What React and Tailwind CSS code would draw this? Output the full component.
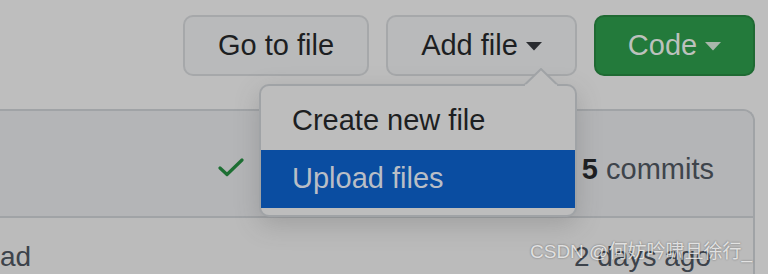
import React from "react";

function Caret({ className }) {
  return (
    <svg width="16" height="9" viewBox="0 0 16 9" className={className}>
      <path d="M0 0 L16 0 L8 8.5 Z" fill="currentColor" />
    </svg>
  );
}

export default function App() {
  const font = { fontFamily: '"Liberation Sans", Arial, sans-serif' };
  return (
    <div
      className="relative w-[768px] h-[274px] overflow-hidden bg-[#bebebe]"
      style={font}
    >
      {/* top buttons */}
      <div className="flex justify-end items-center gap-[17px] pt-[15px] pr-[13px]">
        <div className="h-[61px] w-[186px] flex items-center justify-center rounded-[10px] border-2 border-[#a6a8aa] bg-[#b9babb] text-[29px] text-[#1d1f22]">
          Go to file
        </div>
        <div className="h-[61px] w-[191px] flex items-center justify-center gap-[8px] rounded-[10px] border-2 border-[#a6a8aa] bg-[#b9babb] text-[29px] text-[#1d1f22]">
          <span>Add file</span>
          <Caret className="text-[#2a2c30] mt-[2px]" />
        </div>
        <div className="h-[61px] w-[161px] flex items-center justify-center gap-[8px] rounded-[10px] border-2 border-[#1f6a33] bg-[#237a3b] text-[29px] text-[#bcc1bd]">
          <span>Code</span>
          <Caret className="text-[#a9b7ac] mt-[2px]" />
        </div>
      </div>

      {/* repository box */}
      <div className="mt-[33px] ml-[-20px] mr-[13px] border-2 border-b-0 border-[#a0a3a6] rounded-tr-[12px] bg-[#bbbbbb]">
        <div className="h-[107px] flex items-center bg-[#b4b5b7] border-b-2 border-[#a0a3a6] rounded-tr-[10px]">
          <svg width="26" height="20" viewBox="0 0 26 20" className="ml-[236px] mt-[6px]">
            <path d="M2 11 L9 17.5 L24 3" fill="none" stroke="#1d6f33" strokeWidth="3.2" strokeLinecap="round" strokeLinejoin="round" />
          </svg>
          <div className="ml-auto mr-[39px] mt-[12px] text-[29px] text-[#3e444b]">
            <span className="font-bold text-[#1c1e21]">5</span> commits
          </div>
        </div>
        <div className="h-[60px] flex items-start pt-[18px] text-[28px] text-[#3d434b]">
          <span className="ml-[18px]">ad</span>
          <span className="ml-auto mr-[42px]">2 days ago</span>
        </div>
      </div>

      {/* dropdown */}
      <div className="absolute left-[259px] top-[84px] w-[318px] h-[133px] rounded-[10px] border-2 border-[#a0a3a6] bg-[#bdbdbd] pt-[6px] shadow-[0_8px_24px_rgba(80,80,80,0.25)]">
        <div className="h-[58px] flex items-center pl-[31px] text-[29px] text-[#1d1f22]">
          Create new file
        </div>
        <div className="h-[58px] flex items-center pl-[31px] bg-[#0a4da1] text-[29px] text-[#b9bec6]">
          Upload files
        </div>
      </div>
      <svg
        width="34"
        height="18"
        viewBox="0 0 34 18"
        className="absolute left-[524px] top-[68px]"
      >
        <path d="M0 17.5 L17 1 L34 17.5" fill="#bdbdbd" stroke="#a0a3a6" strokeWidth="2" />
        <rect x="1" y="16.5" width="32" height="3" fill="#bdbdbd" />
      </svg>

      {/* watermark */}
      <div
        className="absolute left-[530px] top-[238px] text-[19px] text-[rgba(255,255,255,0.75)] [text-shadow:0_0_2px_rgba(0,0,0,0.45)]"
        style={{ fontFamily: '"Liberation Sans", "Noto Sans CJK SC", sans-serif' }}
      >
        CSDN @何妨吟啸且徐行_
      </div>
    </div>
  );
}
